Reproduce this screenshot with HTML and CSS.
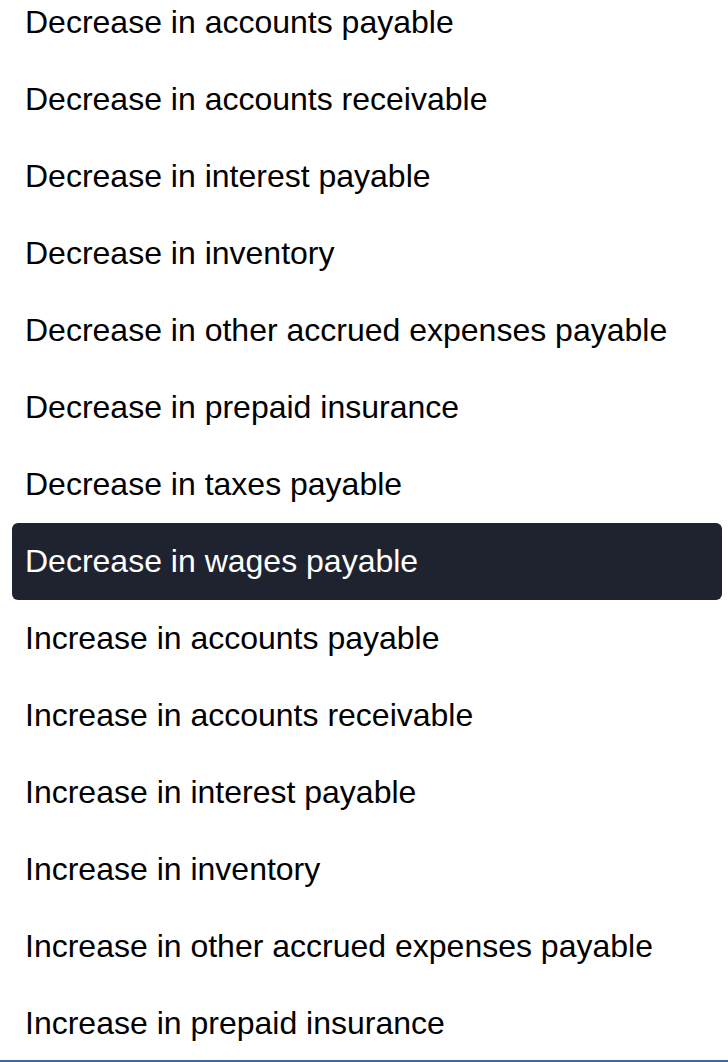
FILE: index.html
```html
<!DOCTYPE html>
<html>
<head>
<meta charset="utf-8">
<link rel="stylesheet" href="styles.css">
</head>
<body>
<div class="frame">
  <ul class="options">
    <li class="option">Decrease in accounts payable</li>
    <li class="option">Decrease in accounts receivable</li>
    <li class="option">Decrease in interest payable</li>
    <li class="option">Decrease in inventory</li>
    <li class="option">Decrease in other accrued expenses payable</li>
    <li class="option">Decrease in prepaid insurance</li>
    <li class="option">Decrease in taxes payable</li>
    <li class="option selected">Decrease in wages payable</li>
    <li class="option">Increase in accounts payable</li>
    <li class="option">Increase in accounts receivable</li>
    <li class="option">Increase in interest payable</li>
    <li class="option">Increase in inventory</li>
    <li class="option">Increase in other accrued expenses payable</li>
    <li class="option">Increase in prepaid insurance</li>
  </ul>
</div>
</body>
</html>
```
FILE: styles.css
```css
html, body {
  margin: 0;
  padding: 0;
  background: #ffffff;
}
.frame {
  height: 1062px;
  box-sizing: border-box;
  overflow: hidden;
  border-bottom: 2px solid #3f62a8;
}
.options {
  list-style: none;
  margin: -16px 6px 0 12px;
  padding: 0;
}
.option {
  height: 77px;
  display: flex;
  align-items: center;
  padding: 0 13px;
  box-sizing: border-box;
  font-family: "Liberation Sans", Arial, sans-serif;
  font-size: 32px;
  color: #000000;
  border-radius: 6px;
}
.option.selected {
  background: #1f2330;
  color: #ffffff;
}
```
